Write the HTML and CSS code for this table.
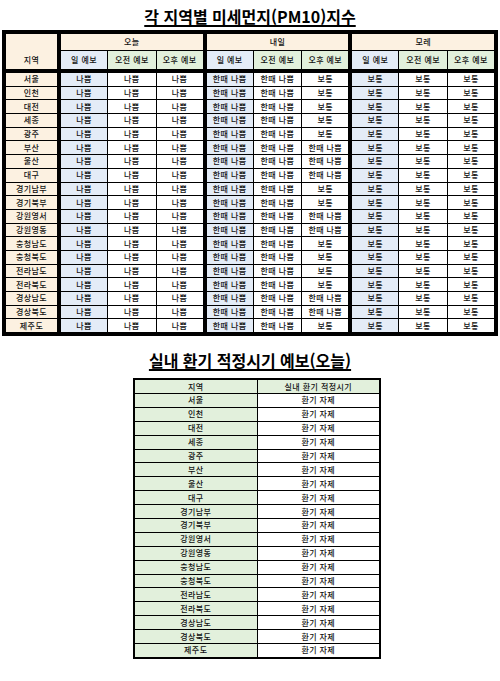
FILE: index.html
```html
<!DOCTYPE html>
<html lang="ko">
<head>
<meta charset="utf-8">
<link rel="stylesheet" href="styles.css">
</head>
<body>
<div class="page">
  <h1 class="title"><span>각 지역별 미세먼지(PM10)지수</span></h1>
  <table class="pm">
    <colgroup>
      <col class="c-rg"><col><col><col><col><col><col><col><col><col>
    </colgroup>
    <thead>
      <tr class="h1">
        <th class="rg top g"></th>
        <th colspan="3" class="cream g">오늘</th>
        <th colspan="3" class="cream g">내일</th>
        <th colspan="3" class="cream">모레</th>
      </tr>
      <tr class="h2">
        <th class="rg bot g">지역</th>
        <th class="blue">일 예보</th><th class="green">오전 예보</th><th class="green g">오후 예보</th>
        <th class="blue">일 예보</th><th class="green">오전 예보</th><th class="green g">오후 예보</th>
        <th class="blue">일 예보</th><th class="green">오전 예보</th><th class="green">오후 예보</th>
      </tr>
    </thead>
    <tbody>
      <tr><td class="rg g">서울</td><td class="blue">나쁨</td><td>나쁨</td><td class="g">나쁨</td><td class="blue">한때 나쁨</td><td>한때 나쁨</td><td class="g">보통</td><td class="blue">보통</td><td>보통</td><td>보통</td></tr>
      <tr><td class="rg g">인천</td><td class="blue">나쁨</td><td>나쁨</td><td class="g">나쁨</td><td class="blue">한때 나쁨</td><td>한때 나쁨</td><td class="g">보통</td><td class="blue">보통</td><td>보통</td><td>보통</td></tr>
      <tr><td class="rg g">대전</td><td class="blue">나쁨</td><td>나쁨</td><td class="g">나쁨</td><td class="blue">한때 나쁨</td><td>한때 나쁨</td><td class="g">보통</td><td class="blue">보통</td><td>보통</td><td>보통</td></tr>
      <tr><td class="rg g">세종</td><td class="blue">나쁨</td><td>나쁨</td><td class="g">나쁨</td><td class="blue">한때 나쁨</td><td>한때 나쁨</td><td class="g">보통</td><td class="blue">보통</td><td>보통</td><td>보통</td></tr>
      <tr><td class="rg g">광주</td><td class="blue">나쁨</td><td>나쁨</td><td class="g">나쁨</td><td class="blue">한때 나쁨</td><td>한때 나쁨</td><td class="g">보통</td><td class="blue">보통</td><td>보통</td><td>보통</td></tr>
      <tr><td class="rg g">부산</td><td class="blue">나쁨</td><td>나쁨</td><td class="g">나쁨</td><td class="blue">한때 나쁨</td><td>한때 나쁨</td><td class="g">한때 나쁨</td><td class="blue">보통</td><td>보통</td><td>보통</td></tr>
      <tr><td class="rg g">울산</td><td class="blue">나쁨</td><td>나쁨</td><td class="g">나쁨</td><td class="blue">한때 나쁨</td><td>한때 나쁨</td><td class="g">한때 나쁨</td><td class="blue">보통</td><td>보통</td><td>보통</td></tr>
      <tr><td class="rg g">대구</td><td class="blue">나쁨</td><td>나쁨</td><td class="g">나쁨</td><td class="blue">한때 나쁨</td><td>한때 나쁨</td><td class="g">한때 나쁨</td><td class="blue">보통</td><td>보통</td><td>보통</td></tr>
      <tr><td class="rg g">경기남부</td><td class="blue">나쁨</td><td>나쁨</td><td class="g">나쁨</td><td class="blue">한때 나쁨</td><td>한때 나쁨</td><td class="g">보통</td><td class="blue">보통</td><td>보통</td><td>보통</td></tr>
      <tr><td class="rg g">경기북부</td><td class="blue">나쁨</td><td>나쁨</td><td class="g">나쁨</td><td class="blue">한때 나쁨</td><td>한때 나쁨</td><td class="g">보통</td><td class="blue">보통</td><td>보통</td><td>보통</td></tr>
      <tr><td class="rg g">강원영서</td><td class="blue">나쁨</td><td>나쁨</td><td class="g">나쁨</td><td class="blue">한때 나쁨</td><td>한때 나쁨</td><td class="g">한때 나쁨</td><td class="blue">보통</td><td>보통</td><td>보통</td></tr>
      <tr><td class="rg g">강원영동</td><td class="blue">나쁨</td><td>나쁨</td><td class="g">나쁨</td><td class="blue">한때 나쁨</td><td>한때 나쁨</td><td class="g">한때 나쁨</td><td class="blue">보통</td><td>보통</td><td>보통</td></tr>
      <tr><td class="rg g">충청남도</td><td class="blue">나쁨</td><td>나쁨</td><td class="g">나쁨</td><td class="blue">한때 나쁨</td><td>한때 나쁨</td><td class="g">보통</td><td class="blue">보통</td><td>보통</td><td>보통</td></tr>
      <tr><td class="rg g">충청북도</td><td class="blue">나쁨</td><td>나쁨</td><td class="g">나쁨</td><td class="blue">한때 나쁨</td><td>한때 나쁨</td><td class="g">보통</td><td class="blue">보통</td><td>보통</td><td>보통</td></tr>
      <tr><td class="rg g">전라남도</td><td class="blue">나쁨</td><td>나쁨</td><td class="g">나쁨</td><td class="blue">한때 나쁨</td><td>한때 나쁨</td><td class="g">보통</td><td class="blue">보통</td><td>보통</td><td>보통</td></tr>
      <tr><td class="rg g">전라북도</td><td class="blue">나쁨</td><td>나쁨</td><td class="g">나쁨</td><td class="blue">한때 나쁨</td><td>한때 나쁨</td><td class="g">보통</td><td class="blue">보통</td><td>보통</td><td>보통</td></tr>
      <tr><td class="rg g">경상남도</td><td class="blue">나쁨</td><td>나쁨</td><td class="g">나쁨</td><td class="blue">한때 나쁨</td><td>한때 나쁨</td><td class="g">한때 나쁨</td><td class="blue">보통</td><td>보통</td><td>보통</td></tr>
      <tr><td class="rg g">경상북도</td><td class="blue">나쁨</td><td>나쁨</td><td class="g">나쁨</td><td class="blue">한때 나쁨</td><td>한때 나쁨</td><td class="g">한때 나쁨</td><td class="blue">보통</td><td>보통</td><td>보통</td></tr>
      <tr><td class="rg g">제주도</td><td class="blue">나쁨</td><td>나쁨</td><td class="g">나쁨</td><td class="blue">한때 나쁨</td><td>한때 나쁨</td><td class="g">보통</td><td class="blue">보통</td><td>보통</td><td>보통</td></tr>
    </tbody>
  </table>

  <h2 class="title title2"><span>실내 환기 적정시기 예보(오늘)</span></h2>
  <table class="vent">
    <thead>
      <tr><th class="green">지역</th><th class="green">실내 환기 적정시기</th></tr>
    </thead>
    <tbody>
      <tr><td class="green">서울</td><td>환기 자제</td></tr>
      <tr><td class="green">인천</td><td>환기 자제</td></tr>
      <tr><td class="green">대전</td><td>환기 자제</td></tr>
      <tr><td class="green">세종</td><td>환기 자제</td></tr>
      <tr><td class="green">광주</td><td>환기 자제</td></tr>
      <tr><td class="green">부산</td><td>환기 자제</td></tr>
      <tr><td class="green">울산</td><td>환기 자제</td></tr>
      <tr><td class="green">대구</td><td>환기 자제</td></tr>
      <tr><td class="green">경기남부</td><td>환기 자제</td></tr>
      <tr><td class="green">경기북부</td><td>환기 자제</td></tr>
      <tr><td class="green">강원영서</td><td>환기 자제</td></tr>
      <tr><td class="green">강원영동</td><td>환기 자제</td></tr>
      <tr><td class="green">충청남도</td><td>환기 자제</td></tr>
      <tr><td class="green">충청북도</td><td>환기 자제</td></tr>
      <tr><td class="green">전라남도</td><td>환기 자제</td></tr>
      <tr><td class="green">전라북도</td><td>환기 자제</td></tr>
      <tr><td class="green">경상남도</td><td>환기 자제</td></tr>
      <tr><td class="green">경상북도</td><td>환기 자제</td></tr>
      <tr><td class="green">제주도</td><td>환기 자제</td></tr>
    </tbody>
  </table>
</div>
</body>
</html>
```

FILE: styles.css
```css
html, body {
  margin: 0;
  padding: 0;
  background: #ffffff;
}
.page {
  width: 500px;
  padding-top: 6px;
  font-family: "Noto Sans CJK KR", "Noto Sans", sans-serif;
  color: #111;
}
.title {
  margin: 0;
  text-align: center;
  font-size: 16px;
  font-weight: 700;
  line-height: 20px;
  height: 24px;
  color: #000;
}
.title span {
  text-decoration: underline;
  text-decoration-thickness: 2px;
  text-underline-offset: 2px;
}
.title2 {
  margin-top: 14px;
}

table {
  border-collapse: collapse;
  table-layout: fixed;
}
th, td {
  padding: 0;
  text-align: center;
  vertical-align: middle;
  font-size: 8px;
  font-weight: 500;
  letter-spacing: 0.4px;
  line-height: 10px;
  white-space: nowrap;
  overflow: hidden;
}

/* main PM10 table */
.pm {
  width: 496px;
  margin-left: 2px;
  border: 4px solid #000;
}
.pm .c-rg { width: 55px; }
.pm th, .pm td {
  border: 1px solid #000;
  height: 12.7px;
}
.pm .h1 th { height: 16px; }
.pm .h2 th { height: 18px; border-bottom: 4px solid #000; }
.pm .g { border-right: 4px solid #000; }
.pm .top { border-bottom: none; }
.pm .bot { border-top: none; }

.rg, .cream { background: #fcf1e1; }
.blue { background: #e4ecf7; }
.green { background: #e2f0dc; }

/* ventilation table */
.vent {
  width: 248px;
  margin-left: 133px;
  margin-top: 4px;
  border: 2px solid #000;
}
.vent th, .vent td {
  border: 1px solid #000;
  height: 12.9px;
  width: 50%;
}
```
